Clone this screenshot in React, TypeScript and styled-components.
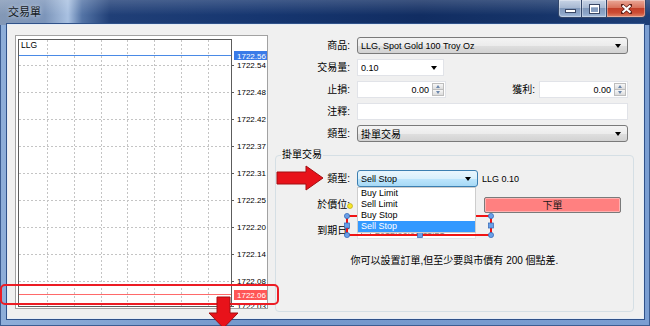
import styled, { createGlobalStyle } from "styled-components";

const GlobalStyle = createGlobalStyle`
  html, body {
    margin: 0;
    padding: 0;
    overflow: hidden;
  }
  body {
    width: 650px;
    height: 326px;
    font-family: "Liberation Sans", "Noto Sans CJK TC", sans-serif;
    color: #000;
  }
`;

const Window = styled.div`
  position: relative;
  width: 650px;
  height: 326px;
  display: flex;
  flex-direction: column;
  background: linear-gradient(90deg, #8eaed9, #7397cb 40%, #7a9ed2);
  box-shadow: inset 0 0 0 1px #3c5d92;
  overflow: hidden;
`;

const TitleBar = styled.div`
  height: 25px;
  flex-shrink: 0;
  display: flex;
  justify-content: space-between;
  align-items: flex-start;
  padding: 0 4px 0 8px;
  background: linear-gradient(180deg, rgba(255, 255, 255, 0.18), rgba(255, 255, 255, 0) 60%),
    linear-gradient(90deg, #8398b6 0px, #7c95ba 45px, #a9c1e1 68px, #5474a6 82px, #203f77 110px, #163670 260px, #112d62 420px, #163469 540px, #1d3e77 650px);
`;

const Title = styled.div`
  font-size: 11px;
  line-height: 12px;
  margin-top: 6px;
  color: #141a24;
  text-shadow: 0 0 4px rgba(255, 255, 255, 0.7);
`;

const Caption = styled.div`
  display: flex;
`;

const CaptionButton = styled.div<{ $w: number; $close?: boolean; $first?: boolean }>`
  width: ${(p) => p.$w}px;
  height: 18px;
  box-sizing: border-box;
  display: flex;
  align-items: center;
  justify-content: center;
  border: 1px solid #33476a;
  border-top: none;
  border-left-width: ${(p) => (p.$first ? 1 : 0)}px;
  border-radius: ${(p) => (p.$first ? "0 0 0 4px" : p.$close ? "0 0 4px 0" : "0")};
  background: ${(p) =>
    p.$close
      ? "linear-gradient(#eaa898, #d9735d 45%, #c3402a 50%, #cc4c33 75%, #e0876d)"
      : "linear-gradient(#c8d4e6, #a8b9d2 45%, #8199bb 50%, #8ca5c8 80%, #a6bedd)"};
  box-shadow: inset 0 0 0 1px rgba(255, 255, 255, 0.35);
`;

const MinGlyph = styled.span`
  width: 9px;
  height: 2px;
  margin-top: 5px;
  background: #fff;
  border: 1px solid #3a4866;
`;

const MaxGlyph = styled.span`
  width: 7px;
  height: 5px;
  border: 1px solid #fff;
  border-top-width: 2px;
  outline: 1px solid #3a4866;
`;

const Frame = styled.div`
  flex: 1;
  display: flex;
  padding: 0 7px 8px 8px;
  min-height: 0;
`;

const Client = styled.div`
  flex: 1;
  display: flex;
  align-items: flex-start;
  gap: 7px;
  padding: 10px 0 0 7px;
  background: #f0f0f0;
  box-shadow: 0 0 0 1px #e6edf6, 0 0 0 2px #30528a;
`;

const ChartPanel = styled.div`
  width: 253px;
  height: 274px;
  box-sizing: border-box;
  flex-shrink: 0;
  border: 1px solid #a2a2a2;
  background: #fff;
  overflow: hidden;

  svg {
    display: block;
  }
`;

const FormPanel = styled.div`
  width: 362px;
  margin-top: 2px;
  display: flex;
  flex-direction: column;
`;

const Fields = styled.div`
  display: flex;
  flex-direction: column;
  gap: 5px;
  padding-right: 9px;
`;

const Row = styled.div`
  display: flex;
  align-items: center;
  height: 17px;
`;

const Label = styled.label<{ $w?: number; $gap?: number }>`
  width: ${(p) => (p.$w ? `${p.$w}px` : "auto")};
  flex-shrink: 0;
  margin-right: ${(p) => p.$gap ?? 7}px;
  text-align: right;
  font-size: 10px;
  line-height: 12px;
  white-space: nowrap;
`;

const Spacer = styled.div`
  flex: 1;
`;

type ComboKind = "button" | "edit" | "hot";

const comboBorder: Record<ComboKind, string> = {
  button: "#7a7a7a",
  edit: "#e1e3e8",
  hot: "#3c7fb1",
};

const comboFill: Record<ComboKind, string> = {
  button: "linear-gradient(#f4f4f4, #ececec 50%, #dfdfdf 51%, #d2d2d2)",
  edit: "#fff",
  hot: "linear-gradient(#eaf6fd, #d9f0fc 50%, #bee6fd 51%, #a7d9f5)",
};

const Combo = styled.div<{ $w?: number; $kind: ComboKind }>`
  position: relative;
  box-sizing: border-box;
  ${(p) => (p.$w ? `width: ${p.$w}px; flex-shrink: 0;` : "flex: 1;")}
  height: 17px;
  display: flex;
  align-items: center;
  padding: 0 3px 0 3px;
  font-size: 9px;
  border-radius: ${(p) => (p.$kind === "edit" ? 0 : 3)}px;
  border: 1px solid ${(p) => comboBorder[p.$kind]};
  background: ${(p) => comboFill[p.$kind]};
`;

const ComboText = styled.span<{ $cjk?: boolean }>`
  flex: 1;
  white-space: nowrap;
  overflow: hidden;
  font-size: ${(p) => (p.$cjk ? 10 : 9)}px;
`;

const Caret = styled.span`
  width: 0;
  height: 0;
  border-left: 3.5px solid transparent;
  border-right: 3.5px solid transparent;
  border-top: 4px solid #000;
  margin-right: 3px;
`;

const SpinBox = styled.div`
  width: 89px;
  height: 17px;
  box-sizing: border-box;
  flex-shrink: 0;
  display: flex;
  background: #fff;
  border: 1px solid #e1e3e8;
  font-size: 9px;
`;

const SpinValue = styled.span`
  flex: 1;
  display: flex;
  align-items: center;
  justify-content: flex-end;
  padding-right: 3px;
`;

const SpinButtons = styled.div`
  width: 12px;
  margin: 1px 1px 1px 0;
  display: flex;
  flex-direction: column;
`;

const SpinHalf = styled.div<{ $up?: boolean }>`
  flex: 1;
  display: flex;
  align-items: center;
  justify-content: center;
  background: linear-gradient(#f7f7f7, #dcdcdc);
  border: 1px solid #bdbdbd;
  ${(p) => (p.$up ? "border-bottom: none;" : "")}

  &::after {
    content: "";
    border-left: 2.5px solid transparent;
    border-right: 2.5px solid transparent;
    ${(p) => (p.$up ? "border-bottom: 3px solid #6c87ac;" : "border-top: 3px solid #6c87ac;")}
  }
`;

const TextInput = styled.div<{ $w?: number }>`
  ${(p) => (p.$w ? `width: ${p.$w}px; flex-shrink: 0;` : "flex: 1;")}
  height: 17px;
  box-sizing: border-box;
  background: #fff;
  border: 1px solid #e1e3e8;
`;

const Group = styled.fieldset`
  margin: 7px 3px 0 0;
  padding: 9px 0 0 0;
  height: 163px;
  box-sizing: border-box;
  min-width: 0;
  border: 1px solid #d5dfe5;
  border-radius: 4px;
`;

const Legend = styled.legend`
  margin-left: 5px;
  padding: 0 1px;
  font-size: 10px;
  line-height: 12px;
`;

const GroupBody = styled.div`
  display: flex;
  flex-direction: column;
  gap: 9px;
`;

const SelectWrap = styled.div`
  position: relative;
  width: 121px;
  flex-shrink: 0;
  display: flex;
`;

const DropList = styled.ul`
  position: absolute;
  top: 17px;
  left: 0;
  z-index: 2;
  width: 119px;
  margin: 0;
  padding: 0;
  list-style: none;
  box-sizing: border-box;
  background: #fff;
  border: 1px solid #cdcdcd;
`;

const DropItem = styled.li<{ $active?: boolean }>`
  height: 11px;
  line-height: 11px;
  padding-left: 3px;
  font-size: 9px;
  color: ${(p) => (p.$active ? "#fff" : "#000")};
  background: ${(p) => (p.$active ? "#3399ff" : "transparent")};
`;

const Aside = styled.span`
  margin-left: 4px;
  font-size: 9px;
`;

const OrderButton = styled.div`
  width: 137px;
  height: 16px;
  margin-left: 8px;
  box-sizing: border-box;
  display: flex;
  align-items: center;
  justify-content: center;
  background: #ff8080;
  border: 1px solid #7a7a7a;
  border-radius: 2px;
  box-shadow: inset 0 0 0 1px #ffb0b0;
  font-size: 10px;
  color: #1a1a1a;
`;

const DatePicker = styled.div`
  width: 119px;
  height: 17px;
  box-sizing: border-box;
  flex-shrink: 0;
  display: flex;
  align-items: center;
  gap: 4px;
  padding: 0 3px;
  background: #fff;
  border: 1px solid #e1e3e8;
  font-size: 9px;
  color: #8a8a8a;
`;

const Check = styled.span`
  width: 8px;
  height: 8px;
  border: 1px solid #8f9fb5;
  background: #eef2f7;
`;

const Note = styled.p`
  margin: 16px 0 0;
  text-align: center;
  font-size: 10px;
  line-height: 12px;
`;

const Overlay = styled.svg`
  position: absolute;
  left: 0;
  top: 0;
  pointer-events: none;
`;

const gridX = [47, 74, 101, 127, 154, 181, 208];
const gridY = [65, 92, 119, 146, 173, 200, 227, 254, 281];
const priceTicks = [
  { y: 65, v: "1722.54" },
  { y: 92, v: "1722.48" },
  { y: 119, v: "1722.42" },
  { y: 146, v: "1722.37" },
  { y: 173, v: "1722.31" },
  { y: 200, v: "1722.25" },
  { y: 227, v: "1722.20" },
  { y: 254, v: "1722.14" },
  { y: 281, v: "1722.08" },
  { y: 306, v: "1722.03" },
];

const Chart = () => (
  <svg width="251" height="272" viewBox="16 36 251 272" fontFamily="Liberation Sans, sans-serif">
    {gridX.map((x) => (
      <line key={x} x1={x + 0.5} y1={40} x2={x + 0.5} y2={306} stroke="#c4c4c4" strokeDasharray="2 2" />
    ))}
    {gridY.map((y) => (
      <line key={y} x1={19} y1={y + 0.5} x2={231} y2={y + 0.5} stroke="#c4c4c4" strokeDasharray="2 2" />
    ))}
    <rect x={18.5} y={39.5} width={213} height={267} fill="none" stroke="#5c5c5c" />
    <line x1={19} y1={55.5} x2={231} y2={55.5} stroke="#4a8ae6" />
    <line x1={19} y1={294.5} x2={231} y2={294.5} stroke="#ff6a6a" />
    <text x={21} y={48} fontSize={8.5} fill="#000">
      LLG
    </text>
    {priceTicks.map((t) => (
      <g key={t.v}>
        <line x1={231} y1={t.y + 0.5} x2={234} y2={t.y + 0.5} stroke="#5c5c5c" />
        <text x={237} y={t.y + 3} fontSize={8} fill="#000">
          {t.v}
        </text>
      </g>
    ))}
    <rect x={234} y={51} width={33} height={9} fill="#3a7be8" />
    <text x={237} y={58.5} fontSize={8} fill="#fff">
      1722.56
    </text>
    <rect x={234} y={290} width={33} height={10} fill="#ff5656" />
    <text x={237} y={298} fontSize={8} fill="#fff">
      1722.06
    </text>
  </svg>
);

const Annotations = () => (
  <Overlay width="650" height="326" viewBox="0 0 650 326">
    <rect x={1} y={285} width={277} height={19} rx={4} fill="none" stroke="#ec1c24" strokeWidth={2} />
    <polygon
      points="217,297 230,297 230,313 238,313 223.5,328 209,313 217,313"
      fill="#e8121a"
      stroke="#a30f12"
      strokeWidth={1}
    />
    <polygon
      points="277,172 306,172 306,166 323,178 306,190 306,184 277,184"
      fill="#e8121a"
      stroke="#a30f12"
      strokeWidth={1}
    />
    <rect x={347} y={216} width={144} height={19} fill="none" stroke="#f01414" strokeWidth={2} />
    <line x1={420} y1={203} x2={420} y2={216} stroke="#5a8ad0" />
    <circle cx={420} cy={203} r={3} fill="#2fd12f" stroke="#1c9a1c" strokeWidth={0.6} />
    <circle cx={350} cy={206} r={2.5} fill="#f5e62c" stroke="#b39d00" strokeWidth={0.6} />
    {[
      [347, 216],
      [491, 216],
      [347, 235],
      [491, 235],
    ].map(([x, y]) => (
      <circle key={`c${x}${y}`} cx={x} cy={y} r={2.6} fill="#6aa0e6" stroke="#2f66b8" strokeWidth={0.7} />
    ))}
    {[
      [420, 216],
      [420, 235],
      [347, 225.5],
      [491, 225.5],
    ].map(([x, y]) => (
      <rect
        key={`s${x}${y}`}
        x={x - 2.5}
        y={y - 2.5}
        width={5}
        height={5}
        fill="#6aa0e6"
        stroke="#2f66b8"
        strokeWidth={0.7}
      />
    ))}
  </Overlay>
);

const Spin = ({ value }: { value: string }) => (
  <SpinBox>
    <SpinValue>{value}</SpinValue>
    <SpinButtons>
      <SpinHalf $up />
      <SpinHalf />
    </SpinButtons>
  </SpinBox>
);

export default function App() {
  return (
    <>
      <GlobalStyle />
      <Window>
        <TitleBar>
          <Title>交易單</Title>
          <Caption>
            <CaptionButton $w={24} $first>
              <MinGlyph />
            </CaptionButton>
            <CaptionButton $w={25}>
              <MaxGlyph />
            </CaptionButton>
            <CaptionButton $w={39} $close>
              <svg width="11" height="10" viewBox="0 0 11 10">
                <path
                  d="M1.5 1.5 L9.5 8.5 M9.5 1.5 L1.5 8.5"
                  stroke="#5b1a12"
                  strokeWidth="3.6"
                  strokeLinecap="square"
                />
                <path d="M1.5 1.5 L9.5 8.5 M9.5 1.5 L1.5 8.5" stroke="#fff" strokeWidth="2.2" />
              </svg>
            </CaptionButton>
          </Caption>
        </TitleBar>
        <Frame>
          <Client>
            <ChartPanel>
              <Chart />
            </ChartPanel>
            <FormPanel>
              <Fields>
                <Row>
                  <Label $w={75}>商品:</Label>
                  <Combo $kind="button">
                    <ComboText>LLG, Spot Gold 100 Troy Oz</ComboText>
                    <Caret />
                  </Combo>
                </Row>
                <Row>
                  <Label $w={75}>交易量:</Label>
                  <Combo $kind="edit" $w={87}>
                    <ComboText>0.10</ComboText>
                    <Caret />
                  </Combo>
                </Row>
                <Row>
                  <Label $w={75}>止損:</Label>
                  <Spin value="0.00" />
                  <Spacer />
                  <Label $gap={4}>獲利:</Label>
                  <Spin value="0.00" />
                </Row>
                <Row>
                  <Label $w={75}>注釋:</Label>
                  <TextInput />
                </Row>
                <Row>
                  <Label $w={75}>類型:</Label>
                  <Combo $kind="button">
                    <ComboText $cjk>掛單交易</ComboText>
                    <Caret />
                  </Combo>
                </Row>
              </Fields>
              <Group>
                <Legend>掛單交易</Legend>
                <GroupBody>
                  <Row>
                    <Label $w={74}>類型:</Label>
                    <SelectWrap>
                      <Combo $kind="hot" $w={121}>
                        <ComboText>Sell Stop</ComboText>
                        <Caret />
                      </Combo>
                      <DropList>
                        <DropItem>Buy Limit</DropItem>
                        <DropItem>Sell Limit</DropItem>
                        <DropItem>Buy Stop</DropItem>
                        <DropItem $active>Sell Stop</DropItem>
                      </DropList>
                    </SelectWrap>
                    <Aside>LLG 0.10</Aside>
                  </Row>
                  <Row>
                    <Label $w={74}>於價位:</Label>
                    <TextInput $w={119} />
                    <OrderButton>下單</OrderButton>
                  </Row>
                  <Row>
                    <Label $w={74}>到期日:</Label>
                    <DatePicker>
                      <Check />
                      <ComboText>2012.06.06 11:21</ComboText>
                      <Caret />
                    </DatePicker>
                  </Row>
                </GroupBody>
                <Note>你可以設置訂單,但至少要與市價有 200 個點差.</Note>
              </Group>
            </FormPanel>
          </Client>
        </Frame>
        <Annotations />
      </Window>
    </>
  );
}
